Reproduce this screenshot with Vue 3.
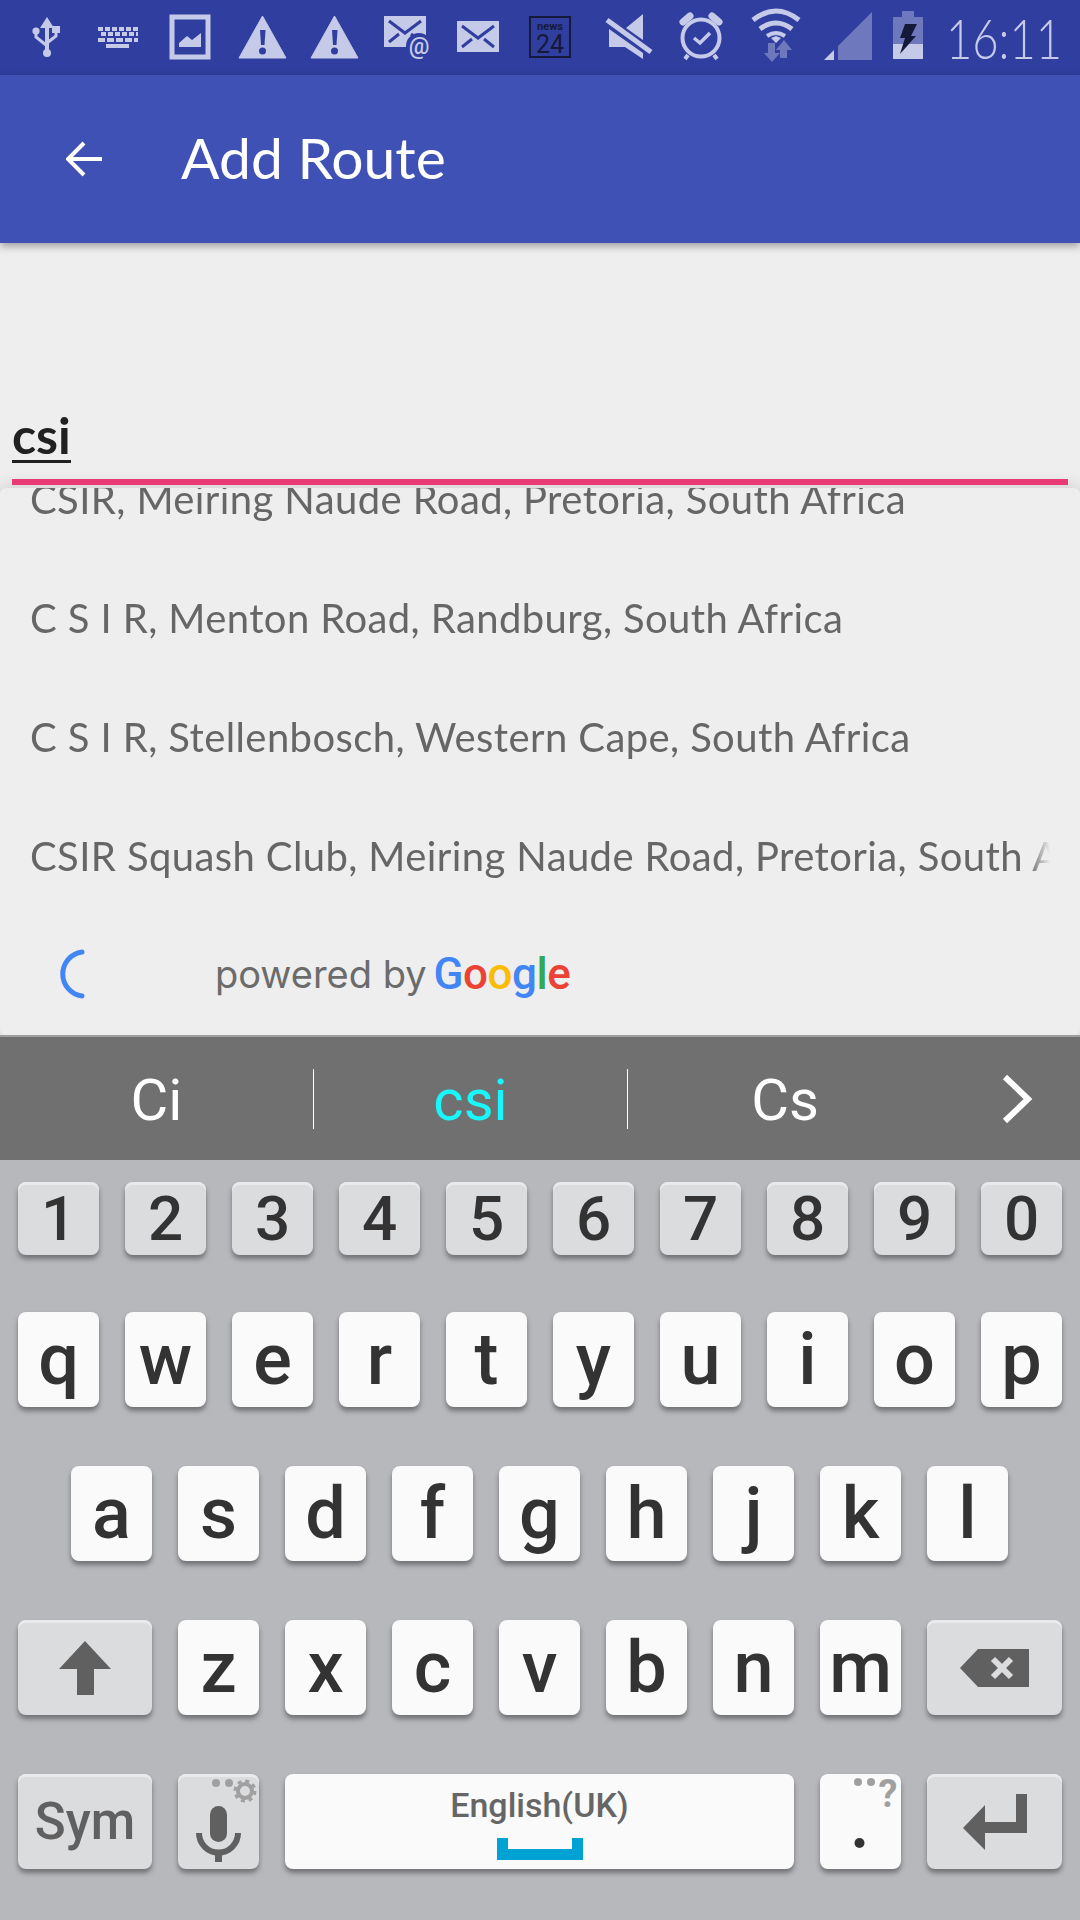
<template>
  <div class="screen">
    <div class="status">
      <svg class="status-icons" width="930" height="75" viewBox="0 0 930 75">
        <g fill="#c5cae9" stroke="none">
          <!-- usb -->
          <path d="M47 17l7 11h-5v22h-4V28h-5z" />
          <circle cx="47" cy="53" r="4" />
          <circle cx="36" cy="31" r="3.6" />
          <rect x="52" y="26" width="8" height="7" />
          <path d="M36 33v4l10 8M56 32v4l-9 7" fill="none" stroke="#c5cae9" stroke-width="3" />
          <!-- keyboard -->
          <g fill="none" stroke="#c5cae9" stroke-width="4">
            <path d="M98 29h40" stroke-dasharray="5 2" />
            <path d="M101 34h37" stroke-dasharray="5 2" />
            <path d="M98 40h40" stroke-dasharray="7 2" />
            <path d="M106 46h23" />
          </g>
          <!-- picture -->
          <rect x="172" y="17" width="36" height="40" fill="none" stroke="#c5cae9" stroke-width="5" />
          <path d="M179 47v-4l8-7 5 4 9-7v14z" />
          <!-- warnings -->
          <g v-for="x in warnX" :key="x" :transform="`translate(${x} 0)`">
            <path d="M23.5 16L47 58H0z" stroke="#c5cae9" stroke-width="1" stroke-linejoin="round" />
            <path d="M21 30h5.500l-1 15h-3.500z" fill="#303f9f" />
            <circle cx="23.500" cy="51" r="3.500" fill="#303f9f" />
          </g>
          <!-- mail with at -->
          <rect x="384" y="16" width="42" height="31" />
          <path d="M389 21l16 12 16-12M389 42l10-8M421 42l-10-8" fill="none" stroke="#303f9f" stroke-width="3" />
          <circle cx="419" cy="46" r="13" fill="#303f9f" />
          <text x="419" y="54" class="at">@</text>
          <!-- mail -->
          <rect x="457" y="21" width="42" height="31" />
          <path d="M462 26l16 12 16-12M462 47l10-8M494 47l-10-8" fill="none" stroke="#303f9f" stroke-width="3" />
          <!-- news 24 -->
          <rect x="530" y="17" width="40" height="40" fill="none" stroke="#15193a" stroke-width="2" />
          <text x="550" y="30" class="news">news</text>
          <text x="550" y="53" class="news-num">24</text>
          <!-- mute -->
          <path d="M643 14v26l-17-12zM609 29l34 24v6l-18-12h-16z" />
          <path d="M607 20l44 32" fill="none" stroke="#c5cae9" stroke-width="5" />
          <!-- alarm -->
          <g fill="none" stroke="#c5cae9">
            <circle cx="701" cy="38" r="18.500" stroke-width="4" />
            <path d="M683 22l7-6M719 22l-7-6" stroke-width="7" stroke-linecap="round" />
            <path d="M694 38l6 5 10-10" stroke-width="3.500" />
            <path d="M688 55l-3 4M714 55l3 4" stroke-width="4" />
          </g>
          <!-- wifi -->
          <g fill="none" stroke="#c5cae9" stroke-width="5">
            <path d="M753 20q23-18 46 0" />
            <path d="M760 29q16-12 32 0" />
            <path d="M767 36q9-6 18 0" stroke-width="4" />
          </g>
          <path d="M771 38l5 5 5-5-5-2z" />
          <path d="M768 43h7v10h5l-8 9-8-9h4zM784 40l8 10h-5v8h-7v-8h-4z" fill="#6d78bd" />
          <!-- signal -->
          <path d="M838 60h34V12l-34 34z" fill="#6d78bd" />
          <path d="M824 60l10-10v10z" />
          <!-- battery -->
          <path d="M902 11h12v6h9v27h-30V17h9z" fill="#6d78bd" />
          <rect x="893" y="44" width="30" height="15" />
          <path d="M905 24h12l-6 12h5l-16 18 5-16h-5z" fill="#15193a" />
        </g>
      </svg>
      <span class="clock">16:11</span>
    </div>

    <div class="toolbar">
      <svg width="36" height="36" viewBox="0 0 36 36">
        <path d="M36 18H3M18 2L2 18l16 16" fill="none" stroke="#fff" stroke-width="4" />
      </svg>
      <span class="title">Add Route</span>
    </div>

    <div class="form">
      <span class="typed">csi</span>
      <div class="focus-line"></div>
    </div>

    <div class="dropdown">
      <div class="places">
        <div v-for="p in places" :key="p" class="place">{{ p }}</div>
      </div>
      <div class="powered">
        <svg width="30" height="50" viewBox="0 0 30 50">
          <path d="M22 3A22.200 22.200 0 0 0 22 47" fill="none" stroke="#4285f4" stroke-width="5" stroke-linecap="round" />
        </svg>
        <span class="by">powered by</span>
        <span class="google"><i class="b">G</i><i class="r">o</i><i class="y">o</i><i class="b">g</i><i class="g">l</i><i class="r">e</i></span>
      </div>
    </div>

    <div class="suggest">
      <div class="cell"><span>Ci</span></div>
      <div class="cell"><span class="picked">csi</span></div>
      <div class="cell last"><span>Cs</span></div>
      <div class="more">
        <svg width="32" height="50" viewBox="0 0 32 50">
          <path d="M4 3l23 22L4 47" fill="none" stroke="#fff" stroke-width="6" />
        </svg>
      </div>
    </div>

    <div class="keyboard">
      <div class="row digits">
        <div v-for="d in digits" :key="d" class="key grey">{{ d }}</div>
      </div>
      <div class="row">
        <div v-for="k in row1" :key="k" class="key">{{ k }}</div>
      </div>
      <div class="row home">
        <div v-for="k in row2" :key="k" class="key">{{ k }}</div>
      </div>
      <div class="row">
        <div class="key grey wide">
          <svg width="52" height="54" viewBox="0 0 52 54">
            <path d="M26 0L52 28H35v26H18V28H0z" fill="#606060" />
          </svg>
        </div>
        <div v-for="k in row3" :key="k" class="key">{{ k }}</div>
        <div class="key grey wide end">
          <svg width="69" height="38" viewBox="0 0 69 38">
            <path d="M18 0h51v38H18L0 19z" fill="#606060" />
            <path d="M33 10l18 18M51 10L33 28" stroke="#dbdcde" stroke-width="6" />
          </svg>
        </div>
      </div>
      <div class="row">
        <div class="key grey wide sym">Sym</div>
        <div class="key grey">
          <svg class="full" width="81" height="95" viewBox="0 0 81 95">
            <circle cx="38" cy="9" r="4" fill="#a0a0a0" />
            <circle cx="51" cy="9" r="4" fill="#a0a0a0" />
            <circle cx="67" cy="17" r="7" fill="none" stroke="#a0a0a0" stroke-width="4" />
            <circle cx="67" cy="17" r="10" fill="none" stroke="#a0a0a0" stroke-width="3" stroke-dasharray="4 3.850" />
            <rect x="32" y="32" width="17" height="36" rx="8.500" fill="#606060" />
            <path d="M21 59a19.500 19.500 0 0 0 39 0" fill="none" stroke="#606060" stroke-width="6" />
            <rect x="37" y="78" width="7" height="10" fill="#606060" />
          </svg>
        </div>
        <div class="key space">
          <span class="lang">English(UK)</span>
          <svg width="86" height="22" viewBox="0 0 86 22">
            <path d="M5.500 0v16.500h75V0" fill="none" stroke="#00a2d3" stroke-width="11" />
          </svg>
        </div>
        <div class="key dot">
          <svg class="full" width="81" height="95" viewBox="0 0 81 95">
            <circle cx="38" cy="8" r="4" fill="#a0a0a0" />
            <circle cx="51" cy="8" r="4" fill="#a0a0a0" />
            <text x="68" y="33" class="hint">?</text>
            <circle cx="39.500" cy="69" r="5" fill="#333" />
          </svg>
        </div>
        <div class="key grey wide end">
          <svg width="64" height="56" viewBox="0 0 64 56">
            <path d="M53 0h11v39H22v17L0 34 22 11v17h31z" fill="#606060" />
          </svg>
        </div>
      </div>
    </div>
  </div>
</template>

<script setup>
const warnX = [239, 311]

const places = [
  "CSIR, Meiring Naude Road, Pretoria, South Africa",
  "C S I R, Menton Road, Randburg, South Africa",
  "C S I R, Stellenbosch, Western Cape, South Africa",
  "CSIR Squash Club, Meiring Naude Road, Pretoria, South Africa",
]

const digits = ["1", "2", "3", "4", "5", "6", "7", "8", "9", "0"]
const row1 = ["q", "w", "e", "r", "t", "y", "u", "i", "o", "p"]
const row2 = ["a", "s", "d", "f", "g", "h", "j", "k", "l"]
const row3 = ["z", "x", "c", "v", "b", "n", "m"]
</script>

<style>
html,
body {
  margin: 0;
  background: #eee;
}
</style>

<style scoped>
.screen {
  width: 1080px;
  height: 1920px;
  display: flex;
  flex-direction: column;
  overflow: hidden;
  background: #eee;
  font-family: Roboto, sans-serif;
}
.status {
  height: 75px;
  flex: none;
  display: flex;
  align-items: center;
  background: #303f9f;
}
.status-icons {
  flex: none;
}
.at {
  font: 500 23px Roboto, sans-serif;
  text-anchor: middle;
}
.news {
  font: 700 11px/11px Roboto, sans-serif;
  fill: #15193a;
  text-anchor: middle;
}
.news-num {
  font: 400 25px/25px Roboto, sans-serif;
  fill: #15193a;
  text-anchor: middle;
}
.clock {
  margin-left: 16px;
  font: 300 56px Lato, sans-serif;
  color: #c5cae9;
  transform: scaleX(0.81);
  transform-origin: left center;
  white-space: nowrap;
}
.toolbar {
  height: 168px;
  flex: none;
  display: flex;
  align-items: center;
  padding-left: 66px;
  background: #3f51b5;
  box-shadow: 0 3px 8px rgba(0, 0, 0, 0.35);
  position: relative;
  z-index: 3;
}
.title {
  margin-left: 79px;
  margin-top: -4px;
  font: 400 57px Lato, sans-serif;
  color: #fff;
}
.form {
  height: 245px;
  flex: none;
  display: flex;
  flex-direction: column;
  justify-content: flex-end;
  align-items: flex-start;
  padding: 0 12px 3px 12px;
  box-sizing: border-box;
  position: relative;
  z-index: 2;
}
.typed {
  font: 700 50px/50px Lato, sans-serif;
  color: #212121;
  border-bottom: 3px solid #212121;
  margin-bottom: 16px;
}
.focus-line {
  align-self: stretch;
  height: 6px;
  background: #e83b76;
}
.dropdown {
  height: 547px;
  flex: none;
  overflow: hidden;
  border-radius: 6px;
  background: #eee;
  box-shadow: 0 -2px 16px rgba(0, 0, 0, 0.14);
  position: relative;
  z-index: 1;
}
.places {
  margin-top: -48px;
}
.place {
  height: 119px;
  padding-left: 30px;
  width: 1020px;
  overflow: hidden;
  white-space: nowrap;
  font: 400 40px/119px Lato, sans-serif;
  letter-spacing: 0.4px;
  color: #666;
  -webkit-mask-image: linear-gradient(to right, #000 98%, transparent);
  mask-image: linear-gradient(to right, #000 98%, transparent);
}
.powered {
  height: 115px;
  display: flex;
  align-items: center;
  padding-left: 60px;
}
.by {
  margin-left: 125px;
  font: 400 38px Inter, sans-serif;
  color: #6b6b6b;
}
.google {
  margin-left: 7px;
  font: 500 44px Roboto, sans-serif;
  letter-spacing: -0.5px;
}
.google i {
  font-style: normal;
}
.b {
  color: #4285f4;
}
.r {
  color: #ea4335;
}
.y {
  color: #fbbc05;
}
.g {
  color: #34a853;
}
.suggest {
  height: 125px;
  flex: none;
  display: flex;
  align-items: center;
  box-sizing: border-box;
  border-top: 2px solid #9e9e9e;
  background: #707070;
  position: relative;
  z-index: 2;
}
.cell {
  width: 314px;
  height: 60px;
  flex: none;
  box-sizing: border-box;
  display: flex;
  align-items: center;
  justify-content: center;
  padding-top: 3px;
  border-right: 1px solid #fff;
  font: 400 58px Roboto, sans-serif;
  color: #fff;
}
.cell.last {
  border-right: 0;
}
.picked {
  color: #18f7fb;
}
.more {
  flex: 1;
  display: flex;
  justify-content: center;
  padding-left: 12px;
}
.keyboard {
  flex: 1;
  background: #b7b8bc;
  padding-top: 22px;
  display: flex;
  flex-direction: column;
  gap: 59px;
}
.row {
  display: flex;
  gap: 26px;
  height: 95px;
  padding-left: 18px;
}
.row.home {
  padding-left: 71px;
}
.row.digits {
  height: 73px;
  margin-bottom: -2px;
}
.key {
  width: 81px;
  flex: none;
  display: flex;
  align-items: center;
  justify-content: center;
  position: relative;
  border-radius: 8px;
  background: #fafafa;
  box-shadow: 0 4px 5px rgba(0, 0, 0, 0.38);
  font: 500 72px Roboto, sans-serif;
  color: #333;
}
.grey {
  background: #dbdcde;
  box-shadow: inset 0 3px 0 #e9eaeb, 0 4px 5px rgba(0, 0, 0, 0.38);
}
.digits .key {
  font: 500 62px Roboto, sans-serif;
}
.wide {
  width: 134px;
}
.wide.end {
  width: 135px;
}
.sym {
  font: 500 51px Roboto, sans-serif;
  color: #606060;
}
.full {
  position: absolute;
  left: 0;
  top: 0;
}
.space {
  width: 509px;
  flex-direction: column;
  gap: 13px;
  justify-content: flex-start;
  padding-top: 11px;
  box-sizing: border-box;
}
.lang {
  font: 500 34px/40px Roboto, sans-serif;
  color: #666;
}
.hint {
  font: 700 38px Roboto, sans-serif;
  fill: #a0a0a0;
  text-anchor: middle;
}
</style>
